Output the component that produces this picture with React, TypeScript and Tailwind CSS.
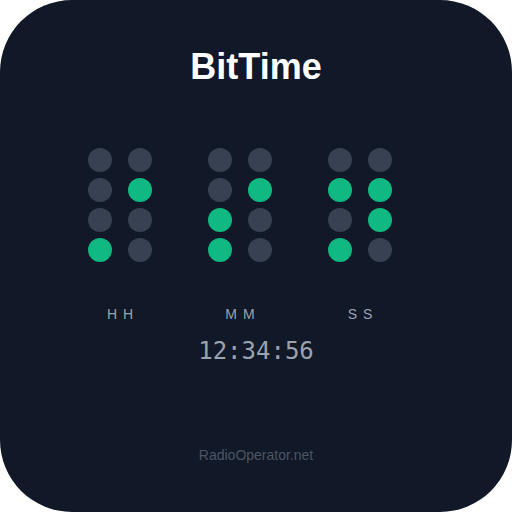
import React from "react";

const groups: { label: string; cols: number[][] }[] = [
  { label: "HH", cols: [[0, 0, 0, 1], [0, 1, 0, 0]] },
  { label: "MM", cols: [[0, 0, 1, 1], [0, 1, 0, 0]] },
  { label: "SS", cols: [[0, 1, 0, 1], [0, 1, 1, 0]] },
];

export default function App() {
  return (
    <div className="w-[512px] h-[512px] bg-white">
      <div className="w-[512px] h-[512px] rounded-[72px] bg-[#111827] flex flex-col items-center pt-[47px]" style={{ fontFamily: "'Liberation Sans', Arial, sans-serif" }}>
        <h1 className="text-[36px] leading-[40px] font-bold text-white">BitTime</h1>
        <div className="mt-[61px] flex gap-[56px] pr-[32px]">
          {groups.map((g) => (
            <div key={g.label} className="flex flex-col items-center">
              <div className="flex gap-[16px]">
                {g.cols.map((col, ci) => (
                  <div key={ci} className="flex flex-col gap-[6px]">
                    {col.map((on, ri) => (
                      <div
                        key={ri}
                        className={on ? "w-[24px] h-[24px] rounded-full bg-[#10b981]" : "w-[24px] h-[24px] rounded-full bg-[#374151]"}
                      />
                    ))}
                  </div>
                ))}
              </div>
              <div className="mt-[42px] text-[14px] leading-[20px] text-[#9ca3af] tracking-[6px] pl-[6px]">{g.label}</div>
            </div>
          ))}
        </div>
        <div className="mt-[11px] text-[24px] leading-[32px] text-[#9ca3af]" style={{ fontFamily: "'DejaVu Sans Mono', monospace" }}>12:34:56</div>
        <div className="mt-[78px] text-[14px] leading-[20px] text-[#4b5563]">RadioOperator.net</div>
      </div>
    </div>
  );
}
